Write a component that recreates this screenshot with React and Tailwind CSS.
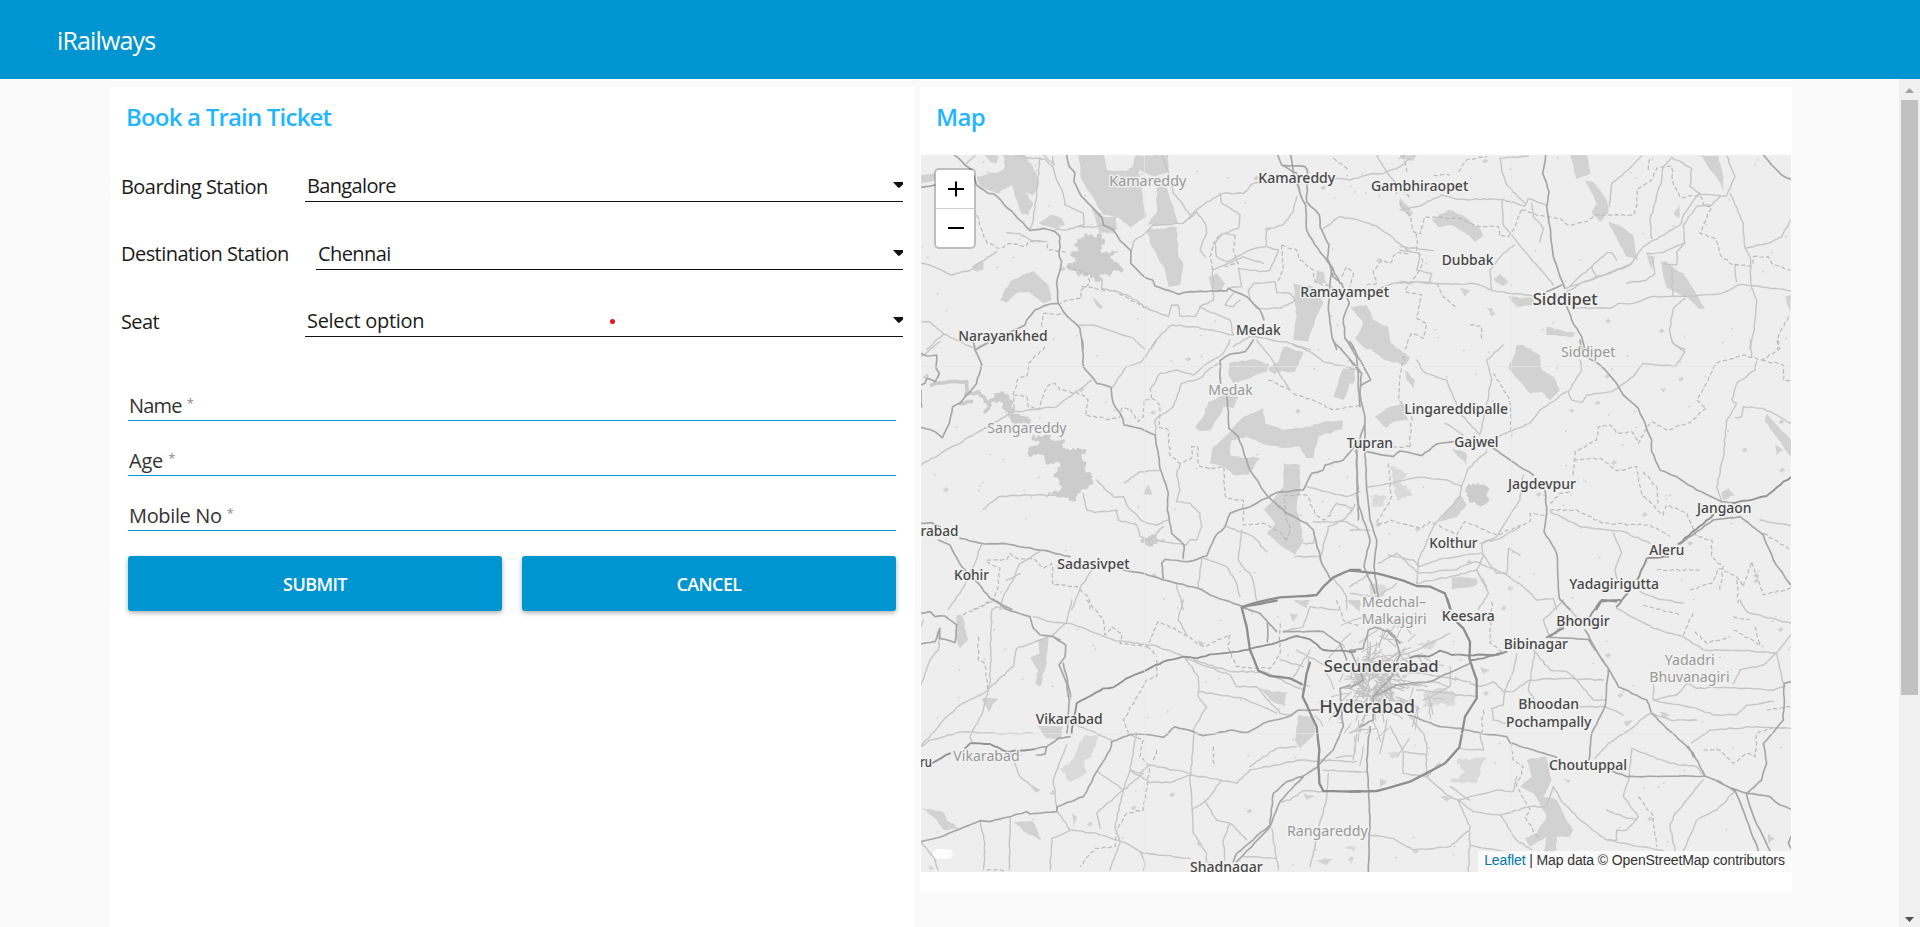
import React from "react";

/* Map sheets: each one is drawn on a grid three times finer than the page. */
const SHEETS = [
  {
    x: 900, y: 70,
    areas: "M255 255L295 258 290 280 270 275zM230 320L300 305 315 290 310 255 375 255 410 310 415 355 400 375 375 365 400 400 385 435 365 432 350 390 335 345 290 370 240 350zM535 255L612 255 620 300 680 303 700 290 705 258 805 255 805 305 765 320 718 300 730 400 740 440 690 472 650 440 610 435 545 330zM765 320L800 345 815 400 835 460 760 465 740 465 770 430 770 360zM740 480L830 470 835 560 850 580 840 645 805 650 795 600 755 530zM575 410L610 440 650 440 645 490 600 490zM415 460L450 435 485 445 495 465 470 475zM300 690L330 635 400 602 445 645 455 690 430 700 385 665 350 670 320 698zM1180 640L1240 650 1270 700 1250 740 1225 815 1180 810 1190 740zM1250 600L1270 605 1280 640 1245 640zM1350 710L1400 705 1420 750 1465 770 1470 838 1400 838 1365 805 1390 760zM63 315L105 310 105 330 63 340zM215 590L250 572 250 600 230 605zM575 680L610 710 600 718zM925 620L950 610 975 640 960 665 935 655z",
    water: "M500 590L530 575 510 555 530 545 525 520 560 490 580 500 600 490 615 515 600 540 625 550 655 540 630 565 655 580 670 605 640 600 630 620 600 612 600 635 560 615 530 612z",
    major: "M163 255L195 285 215 300 230 345 265 370 282 372 345 435 390 482 430 475 465 485 480 500 478 560 485 575 470 640 475 700 490 725 540 775 548 840M500 255L508 290 525 310 522 335 545 380 575 410 607 445 610 465 640 480 660 512 693 542 692 580 735 622 758 630 765 648 835 673 870 665 980 663 985 655 1040 680 1080 720 1092 750M475 700L450 702 405 720 380 750 375 765 300 800 230 838M1133 255L1145 285 1190 310 1200 370 1217 405 1220 480 1245 525 1290 585 1300 620 1325 640 1348 700 1330 745 1335 805 1360 838M1172 255L1180 310 1200 370M1145 285L1215 290 1222 300 1220 395 1258 435 1260 470 1287 525 1282 565 1320 640M1295 600L1290 640 1285 720 1297 805 1310 838M63 352L105 345",
    minor: "M63 580L100 590 155 615 205 603 245 575 290 545M420 262L410 370 400 450 390 478M345 255L375 262 435 268 458 290 470 330 488 365 495 405 550 430 553 465 530 470M430 255L462 285 458 260M465 478L500 480 530 470 575 472 605 465 650 475M195 285L225 258M320 488L355 490 395 512 440 515M63 755L90 755 132 792 230 838M132 792L80 838M695 542L700 515 735 490 760 465 850 460 895 415 940 385 970 370 1030 370 1060 340 1130 335M650 665L690 680 750 720 805 740 815 705 835 705 840 738 885 740 900 710 940 690 938 600M900 712L990 750 1000 795 960 785 880 770 815 765 785 790 755 830M530 765L580 765 640 785 700 805 735 838M1190 380L1180 425 1150 465 1100 478 1098 530 1050 540 1010 560 985 575 950 560 945 520 970 490 1005 495M938 600L960 590 1030 560 1090 580M915 560L900 540 920 490 915 460 890 425 850 460M1070 715L1140 715 1185 690 1170 670 1130 668 1125 635 1085 640 1060 640 1045 660 1050 690 1070 715M1098 530L1135 540 1110 600 1080 605 1015 595 1025 650 985 655M1270 475L1320 440 1370 448 1430 468 1480 505 1530 545M1305 325L1350 330 1400 315 1450 310 1500 290 1530 265M960 370L965 400 1020 435 1015 475 960 495M785 255L805 305 820 370 850 405 870 435M605 625L605 655 650 665M1000 670L975 705 1000 710 1020 690M1430 255L1450 290 1480 330 1490 370M1000 830L1050 800 1100 805 1170 820 1230 838M1360 660L1420 665 1480 640 1530 638",
    dashed: "M230 435L240 470 262 520 300 535 330 520 375 530 385 515 440 515 445 540 500 545M500 590L560 610 570 640 540 665 545 685 500 690 480 700M425 770L430 730 490 733M545 650L650 665 700 695 750 720M1005 495L1000 540 1015 580 975 590M938 600L930 560 940 520 960 495M1145 525L1190 540 1200 570 1240 600 1245 635 1290 650M1325 620L1340 590 1360 610 1350 650M1400 645L1430 640 1420 600 1450 570 1470 580 1490 548 1530 550M1480 330L1530 385M1300 265L1345 300M1145 525L1150 600 1130 640"
  },
  {
    x: 1400, y: 70,
    areas: "M510 255L560 255 572 310 528 328zM555 332L580 335 620 390 625 430 600 455 575 430 590 400zM625 455L655 465 700 495 705 540 715 570 680 560zM740 550L765 560 755 600zM780 570L850 610 885 665 915 715 900 718 860 680 800 655zM95 450L145 420 185 435 240 475 250 495 225 515 190 485 155 465 115 472zM900 255L955 258 970 320 970 365 955 330 930 300zM280 630L300 612 325 635 310 648zM325 680L400 685 400 705 350 710zM440 770L525 790 520 800 440 795zM345 838L360 825 400 838zM0 385L40 430 30 440 0 410zM180 655L210 662 195 680zM258 712L280 715 272 732zM820 430L840 405 838 445zM0 255L50 255 40 272 0 265zM1155 680L1173 675 1170 725z",
    water: "",
    major: "M437 255L428 310 447 365 440 410 450 470 460 560 480 620 495 655M500 710L515 750 545 800 555 838M1090 255L1115 285 1145 315 1173 328M440 665L485 645",
    minor: "M500 655L560 635 640 605 690 585 730 530 840 465 850 435 895 372 980 378 1005 320 980 258M500 665L560 632 640 603 695 582M0 420L60 408 125 375 170 388 310 388 375 408 385 385 438 405M308 388L310 465 460 645M0 635L130 642 230 642 290 665 400 678M530 715L630 715 655 700 700 700 755 680 880 678 965 670 1020 643 1173 662M990 370L1030 460 1035 530 1050 560 1052 640 1070 690 1060 790 1050 838M1035 535L1110 518 1145 500 1173 450M755 505L750 450 785 330 790 290 815 262 875 295 870 350 900 370M725 258L685 300 635 340 628 410M300 265L305 300 320 345 375 400M300 265L385 258M395 400L400 440 430 475 420 515M345 525L310 550 270 600 275 660M500 655L575 590 620 548 635 548 650 570M575 590L590 622M960 380L935 405 890 410 850 465 855 520 830 545 830 585 790 580M740 550L790 548 850 520M680 640L740 630 765 610 760 570M855 685L820 715 808 780 820 820 855 838M0 540L60 550 50 600 95 610 90 635 20 640M0 530L100 542M815 600L818 680M1005 585L1010 635",
    dashed: "M365 420L410 435 480 445 505 465 560 455 590 435 700 435 712 400 710 360 755 330 770 295 815 288 820 340 840 382 900 375 915 410 935 410 915 455 900 490 945 505 965 560 1000 585 1055 588 1060 560 1105 560 1115 580 1173 600M365 420L340 480 325 500 298 498 295 470 240 470 180 445 75 440 62 490 40 485 30 440 0 400M50 490L50 540 70 580 15 665 65 675 50 745 80 760 70 805 35 790 15 838M110 640L130 680 170 715M175 305L200 270 260 260M1165 740L1135 800 1140 838M100 315L150 315M210 765L245 770 245 810M10 255L20 310M745 300L750 265"
  },
  {
    x: 910, y: 340,
    areas: "M957 70L1030 57 1072 75 1070 95 970 130 955 105zM1075 85L1105 65 1120 20 1180 35 1155 95 1080 95zM855 262L880 230 895 185 950 160 985 170 970 205 940 200 930 225 900 272 870 274zM900 370L910 320 965 270 1000 230 1060 205 1065 250 1120 270 1200 260 1240 245 1297 240 1297 268 1225 290 1210 355 1190 355 1170 320 1120 325 1050 308 1010 290 965 300 960 345 1010 355 1030 350 1050 355 1015 405 970 405 940 380zM1270 170L1300 85 1335 90 1320 130 1300 180zM1120 370L1170 375 1170 450 1160 500 1180 600 1155 645 1110 615 1070 580 1095 550 1062 510 1120 440zM700 465L715 435 727 465zM38 110L55 98 58 120z",
    water: "M295 222L340 228 370 240 355 255 310 250zM365 290L425 285 425 300 465 300 455 325 530 330 515 350 530 365 520 385 550 410 545 435 505 460 490 485 460 470 405 465 450 450 450 425 430 410 450 370 410 375 400 345 350 355 355 325 395 315zM255 160L280 155 310 185 310 222 285 220 280 190 255 185zM690 605L735 585 750 570 740 595 765 600 720 620z",
    major: "M517 0L520 80 560 130 603 142 610 190 638 235 642 255 690 265 735 285 745 345 750 385 775 460 772 510 785 580 822 615 820 655M1030 0L1005 35 960 42 930 62 932 130M950 150L957 265 985 290 1020 390 1070 465 1130 520 1190 550 1210 570 1235 670 1260 715M1340 310L1300 360 1245 375 1240 390 1205 400 1180 450 1100 458 1020 500 960 520 945 560 915 590 890 648 835 665 765 658 755 670 760 715M150 595L225 612 280 610 420 635 480 650M640 690L700 700 760 720 865 745 900 765 1000 800M33 40L50 48 80 45 78 85 88 100 75 125 50 115 45 130 33 135M33 150L35 200M190 5L195 30 215 72 200 130 150 190 128 200 118 250 97 293 75 275 33 262M33 550L65 548 90 560M85 600L120 615 155 680 205 730 240 775 305 808M1268 0L1350 95M1310 0L1340 50 1350 200M1340 320L1345 540",
    highway: "M1000 800L1050 785 1110 772 1190 768 1220 765 1240 740 1270 712 1320 690 1350 690",
    minor: "M33 375L285 230 300 218 440 200 545 120M220 508L265 470 340 465 430 465M520 460L530 510 555 518 620 510 625 540 680 555 690 590 720 600 760 560M560 420L610 470 640 470 650 495 700 545 740 555 775 540M643 428L690 395 750 392M607 142L650 80 695 65 740 0M720 150L750 100 800 90 850 105 900 65 935 45M738 285L735 240 790 200 815 130 870 115 900 85 930 70M810 370L800 405 810 450 800 485 840 490 870 520 875 560 860 600 840 600 830 615 755 605M215 612L190 680 155 750 115 808M390 635L330 670 310 720 280 770 270 808M545 690L510 745 485 808M875 655L865 740M950 560L1030 590 1070 635M995 570L985 660 1025 710 1040 780M880 655L950 680 980 730 990 770M800 735L820 808M1190 440L1310 470 1350 455M1210 545L1310 545 1350 570M1150 15L1200 35 1240 65 1350 90M1040 0L1080 50 1110 105 1140 150M1270 712L1310 770 1310 808M1260 520L1280 490 1330 505 1300 540 1255 560 1230 660M200 25L240 0M290 720L330 700M1180 610L1210 610 1215 590M1155 650L1225 650M935 45L960 0M33 50L90 5",
    river: "M65 135L130 125 170 125 168 165 205 155 235 190 270 165M150 190L185 185M225 215L240 195",
    dashed: "M405 20L355 70 350 110 325 115 310 160 315 210M310 165L350 170 355 200 385 210 410 140 435 130 450 150 520 165 535 180 525 225 600 238 630 230 635 205 660 205 685 245 700 230 702 180 725 175 720 150M725 175L750 195 745 260 775 270 780 345 810 370 845 355 845 320 862 320 865 375 900 388 940 380 945 460 950 475 1000 480 1000 555 1060 550 1115 580 1130 605 1140 570 1125 520 1125 465 1190 465 1215 520 1240 540 1270 520M230 660L290 658 300 640 320 655 370 655 400 685 425 670 430 735 500 740 535 770 540 808M230 665L270 685 265 740 250 780 190 808M1075 120L1140 150M1150 160L1230 190 1270 210 1350 195"
  },
  {
    x: 1350, y: 340,
    areas: "M475 85L490 50 500 15 520 15 570 45 575 90 610 110 630 150 600 180 575 155 540 160 520 135zM20 0L110 0 180 50 165 75 105 60zM75 230L110 205 160 190 175 240 130 245 110 265zM165 90L195 120 190 145 170 120zM305 325L350 340 350 375zM330 465L350 495 320 530 265 545zM305 710L380 715 380 735 305 748zM1250 220L1323 300 1323 350 1245 245zM1275 315L1300 330 1280 345zM0 80L15 85 12 130 0 130zM930 145L950 145 940 157zM655 210L672 208 668 220zM1115 455L1135 445 1155 465 1120 480z",
    light: "M120 380L175 400 150 420 190 465 140 480zM70 465L110 470 95 500 65 500zM60 730L110 740 100 770 60 760z",
    water: "M350 440L385 430 418 450 410 490 390 500 355 480z",
    major: "M0 60L35 100 30 160 45 230 45 330 50 450 60 540 80 600 72 680 85 770M0 5L30 60 62 120 35 135M45 250L20 330 22 480 60 600 42 680 75 760M50 335L130 350 150 333 215 347 260 312 310 305M430 325L480 360 550 405M585 450L590 520 582 575 620 640 628 775 660 808M690 0L700 45 750 75 800 130 820 165 865 205 905 300 905 335 930 390 980 410 1040 450 1115 485 1150 488M1170 530L1090 540 1040 575 990 612M1170 530L1240 585 1270 660 1323 735",
    highway: "M0 692L80 700 160 722 200 738 240 740 285 760 302 808",
    rail: "M1323 412L1300 425 1250 468 1150 490M1090 525L985 612M955 650L890 655 862 720M835 758L800 800M740 808L755 780 800 785",
    minor: "M200 60L220 95 290 120 330 220 385 280M445 290L540 250 570 210 650 155M655 155L695 90 690 60M655 155L665 180 695 188 710 165 785 155 850 110 880 70 975 80 1005 35 965 5M460 15L410 60 425 120 400 240 388 285M285 250L340 285M50 442L210 412 290 420 335 440M410 335L355 385 335 440 330 470 255 550 205 660 200 730M520 405L510 480 440 590 395 610M600 515L690 560 820 575 900 610M1115 485L1100 440 1120 350 1130 240 1160 190 1145 180 1160 130 1215 90 1220 65M1155 233L1175 230 1180 200 1240 205 1323 250M1230 540L1323 558M790 580L815 640 795 690 800 720M470 700L475 625 510 645M115 645L190 660 205 680 280 655 390 640M205 700L310 690 380 665 460 700 520 740 560 780 610 775 620 808M395 610L400 650 380 690 415 760 385 808M85 670L140 640 205 700M200 730L300 710 380 690 410 740M870 755L920 775 1000 790M1200 0L1205 50M390 610L450 595 510 560M395 640L440 700 470 700M0 740L60 700M0 760L85 770 140 730M0 570L60 570",
    dashed: "M85 555L120 540 215 565 240 545 320 585 345 545 440 585 540 545 540 520 585 525M670 405L675 335 740 300 745 260 780 255 800 280 845 275 865 310 890 265 905 245 950 270 1020 248 1070 205 1040 180 1100 70 1180 45 1235 60 1285 30 1280 0M1235 60L1300 75 1300 120 1323 122M670 360L750 355 800 392 860 380 875 460 940 525 950 495 1010 520 1040 590 1085 600 1085 650 1120 680 1110 750M600 510L680 510 760 550 900 555 960 590M600 490L630 460 660 455M180 320L185 230 145 180 150 100 165 40M115 370L125 470 80 550M180 320L130 320M1020 750L1085 730 1105 685 1160 710 1180 740 1205 665 1240 765 1323 745M430 100L480 180 485 290M880 395L920 440 925 490M1240 580L1323 630M0 520L15 490M920 690L1050 690M1160 720L1165 790"
  },
  {
    x: 910, y: 600,
    areas: "M140 45L155 45 175 120 150 145 140 120zM385 120L415 110 410 190 390 260 375 250 385 210 360 175 390 160zM380 375L460 380 450 415 410 415zM215 295L265 295 235 335zM33 625L100 635 110 660 150 685 100 690 70 650zM310 665L370 665 395 720 350 700zM1050 265L1095 275 1130 275 1125 320 1080 300zM1165 345L1210 350 1215 400 1170 445 1155 420zM865 120L885 130 870 140zM1180 580L1215 590 1190 600zM1220 780L1270 775 1250 795zM360 560L392 570 380 578zM485 640L500 650 490 685zM1150 0L1200 0 1190 25zM1140 40L1165 45 1150 65zM55 795L75 805 60 810zM1310 0L1350 0 1350 35z",
    light: "M520 410L565 410 545 470 525 480 530 520 480 545 450 505 480 490zM1305 740L1340 740 1330 755z",
    water: "",
    major: "M250 0L290 28 360 50 370 85 390 105 430 110 467 135 465 170 447 195 470 250 478 300 470 400M430 110L450 120M460 190L482 290M480 410L445 415 410 440 370 448M380 465L405 462 410 440M33 725L100 708 210 662 240 665 350 635 360 642 440 635 442 620 520 590 560 515 600 450 605 425 665 402 710 403 760 412 795 380 850 395 880 407 920 400 960 390 1010 398 1060 370 1140 348 1165 330 1228 330M1225 495L1270 450 1300 380M1225 500L1175 530 1130 545 1090 580 1080 675 980 760 970 785M1180 530L1110 605 1080 680 1000 765 980 785M33 40L60 35 75 50 105 48 140 75 135 128 88 115 90 85 75 125 33 132M1100 95L1050 40 995 22M1120 95L1240 95 1290 130 1310 180M1072 70L1072 125M1300 380L1290 265 1320 255",
    highway: "M995 22L1100 2M995 22L1010 80 1020 150 1045 212 1080 228 1140 235 1175 252M1200 188L1190 220 1178 290 1220 380 1228 450 1225 495 1228 550 1240 573 1350 575",
    rail: "M485 400L500 310 580 265 610 262 650 235 700 215 760 185 820 170 860 175 900 163 985 155 1100 128 1160 108 1200 118 1240 150 1335 155M370 448L290 455 240 432 180 430 165 445M65 490L120 460",
    minor: "M33 440L110 350 150 315 220 280 310 200 320 145 430 105 470 65 485 0M33 255L60 180 85 150 90 100M245 30L240 250 215 345 180 410 190 430M370 50L420 65 480 70 610 120 740 138 820 170M470 435L430 540 440 630 480 690 560 700 650 730 700 760 840 775M480 690L425 715 420 810M605 420L500 375M680 400L660 510 640 570 615 680 630 730 600 810M565 515L640 570 560 640 570 685M640 570L700 520M660 510L720 548 780 548 840 525 900 535 980 550 1020 510 1170 480 1225 485M825 175L865 230 865 290 890 320 850 390 850 430 840 540 850 700 890 760 890 785M825 175L960 225 980 260 1040 260 1110 340 1140 345M850 180L960 215 1060 215 1180 270M865 275L1000 295 1100 340M845 630L890 600 935 540M885 600L920 660 960 670 1010 720M960 670L940 720 945 780M210 662L225 730 220 810M300 655L298 810M33 725L70 770 85 810M1085 685L1105 810M1255 520L1250 590 1200 800M33 440L60 420 160 395 260 400 370 400M300 455L330 530 380 570M820 0L805 60 830 105M1110 605L1140 600 1180 572 1250 575M1000 770L1100 775M840 520L720 495 690 520 660 510M690 755L705 790 700 810M1020 500L1100 445 1160 440M1225 480L1340 485M1240 510L1350 515M245 30L260 20 290 28M33 80L40 60M1110 180L1180 200M1150 230L1200 150M1160 150L1250 200M1120 95L1180 80 1200 20 1290 30",
    dashed: "M160 45L245 5M205 110L205 180 225 190 235 270M530 0L580 60 585 105 605 80 635 100 630 130 710 140 745 65 820 100 880 140 960 105 955 145 980 200 1080 205 1110 160 1110 70M740 180L740 230 710 240 640 360 655 400 700 420 690 470 720 500 700 630 650 640 620 690 615 740 555 745 510 800M710 140L740 170M740 450L730 480M910 440L910 500M230 810L290 810M1280 0L1300 60 1350 80"
  },
  {
    x: 1350, y: 600,
    areas: "M530 480L590 470 605 540 580 590 620 600 640 640 670 690 660 710 620 710 620 750 580 760 590 710 540 740 525 715 560 700 590 650 550 580 510 560 545 530zM820 365L850 360 830 380zM390 200L420 210 400 222zM90 535L110 545 90 560zM270 590L310 590 290 605zM930 335L960 345 940 355zM640 535L662 540 655 550zM1255 700L1275 715 1255 730z",
    light: "M320 480L410 475 390 510 380 550 300 545 345 520zM225 275L280 265 325 285 310 320 280 310 220 325zM100 455L150 455 130 475zM200 130L260 120 240 150z",
    water: "",
    major: "M175 345L270 380 330 385 400 402 470 410 480 428 550 450 620 472M785 512L830 530 1065 528M660 60L600 112 715 118 775 205 805 260 890 300 905 340 1030 460 1065 528 1155 568 1190 580 1260 590 1290 615 1323 628M705 90L750 170 775 205M1155 570L1190 660 1225 752M1190 585L1215 660 1260 752M1065 528L1110 545 1155 575M1190 580L1235 540 1250 490 1240 430 1300 360 1303 250 1323 245M775 205L765 320 725 400 717 480M60 380L50 480 60 650 55 815M80 285L140 255 200 248 240 245 360 190M1323 710L1315 730 1323 745M1030 470L1015 440M115 90L135 110 150 165 125 230 70 290 70 360 30 380M0 150L40 145 55 90 75 82 115 95 150 130M0 265L40 240 30 215 0 150",
    highway: "M0 575L80 573 180 545 285 490 328 442 345 350 380 295 380 240 358 175 360 125 340 85 322 68M293 0L300 25",
    rail: "M180 175L200 168 235 170 270 152 305 165 440 165 470 155M590 112L640 85M720 50L750 5 810 0M360 180L400 175 460 158",
    minor: "M630 0L680 50M800 25L910 85 1000 110 1060 150 1180 152 1280 158 1323 105M1280 158L1300 250M1280 158L1240 195 1170 210 1150 250M1170 0L1190 35 1240 50 1323 70M910 300L980 285 1010 250 1040 265 1120 262 1270 270 1303 260M910 300L1040 325 1090 345 1160 345 1190 315 1270 305M900 340L830 395 775 430 735 475M1065 530L1040 500 960 490 910 470 845 445 838 530 820 590M1025 430L1080 390 1220 380 1323 385M1060 540L970 650 960 680 975 752M1155 575L1100 630 1040 660 1000 752M300 200L300 260 220 300M360 250L390 260 430 245 460 275 490 275 540 240 640 235 760 240M550 150L600 210 650 215 680 240M555 150L535 270 560 310M680 240L730 300 765 300M690 320L765 320 820 345M500 160L490 215 465 270 460 315 425 325 430 360 470 370M180 350L220 400 230 430 230 530 290 585 325 600 440 570 490 575 500 530M325 600L360 680 355 815M325 600L370 635 450 645 540 620 590 620 610 560 640 610 690 660 770 720 870 740 940 752M60 705L130 715 190 750 300 740 360 690M110 360L90 460M120 380L160 455 230 465M160 455L160 520 230 530M450 645L500 720 545 750M390 400L400 450 330 445M300 100L200 150 150 165M150 210L360 245M820 590L865 650 830 690 800 690 800 720 770 720M770 630L820 650 860 660M640 0L580 60 600 110M360 735L480 760M200 270L380 290M0 400L40 370M0 515L50 515M20 400L10 480M230 530L270 490M300 560L360 600M910 255L910 300M905 340L960 360 1040 360",
    dashed: "M425 5L420 130 460 160M485 430L490 480 520 500 500 560 540 630 525 650 570 720M1060 450L1110 450 1150 490 1190 460 1215 470 1220 400 1270 380M1000 105L1030 40M1035 95L1070 130 1140 110M1150 90L1240 140M1250 330L1323 320M865 590L910 650 920 740M880 15L990 45M1215 80L1230 130M1150 50L1200 60M400 330L395 400"
  }
];

/* text, x, baseline, width, size, tone */
const LABELS = [
  ["Kamareddy", 1109.3, 185.7, 77, 13.6, 1],
  ["Kamareddy", 1258.3, 183, 77, 13.6, 0],
  ["Gambhiraopet", 1371, 191.3, 97.3, 13.6, 0],
  ["Ramayampet", 1300.3, 296.7, 88.7, 13.6, 0],
  ["Narayankhed", 958.3, 341.3, 89.3, 13.6, 0],
  ["Medak", 1236, 335, 44.7, 13.6, 0],
  ["Dubbak", 1441.7, 264.7, 51.7, 13.6, 0],
  ["Siddipet", 1532.7, 305.3, 65, 16, 0],
  ["Siddipet", 1561, 357.3, 54.3, 13.6, 1],
  ["Medak", 1208.3, 394.7, 44.3, 13.6, 1],
  ["Sangareddy", 987.3, 432.7, 79.3, 13.6, 1],
  ["Lingareddipalle", 1404.3, 414.3, 103.7, 13.6, 0],
  ["Tupran", 1346.7, 447.7, 46.3, 13.6, 0],
  ["Gajwel", 1454.3, 446.7, 44.3, 13.6, 0],
  ["Jagdevpur", 1508, 488.7, 68, 13.6, 0],
  ["Jangaon", 1697, 512.7, 54.5, 13.6, 0],
  ["Kolthur", 1429.3, 547.7, 48.3, 13.6, 0],
  ["Aleru", 1649.3, 554.7, 35, 13.6, 0],
  ["Yadagirigutta", 1569.3, 589, 89.7, 13.6, 0],
  ["rabad", 920.5, 536.3, 38, 13.6, 0],
  ["Kohir", 954, 579.7, 35, 13.6, 0],
  ["Sadasivpet", 1057.3, 568.7, 72.3, 13.6, 0],
  ["Medchal–", 1362, 607.3, 64, 13.6, 1],
  ["Malkajgiri", 1361.7, 624.3, 65, 13.6, 1],
  ["Keesara", 1441.7, 621, 53, 13.6, 0],
  ["Bhongir", 1556.3, 625.7, 53.3, 13.6, 0],
  ["Bibinagar", 1503.7, 649, 64.3, 13.6, 0],
  ["Secunderabad", 1323.7, 672, 115, 16, 0],
  ["Hyderabad", 1319.3, 712.7, 95.7, 18, 0],
  ["Yadadri", 1664.7, 665.3, 50, 13.6, 1],
  ["Bhuvanagiri", 1649.3, 682.3, 80.3, 13.6, 1],
  ["Bhoodan", 1518.3, 708.7, 60.7, 13.6, 0],
  ["Pochampally", 1506, 727, 85.3, 13.6, 0],
  ["Vikarabad", 1035.7, 723.7, 67, 13.6, 0],
  ["Vikarabad", 953.3, 761, 66.3, 13.6, 1],
  ["ru", 920, 767.3, 12, 13.6, 0],
  ["Choutuppal", 1549, 770.3, 78, 13.6, 0],
  ["Rangareddy", 1287, 835.7, 80.7, 13.6, 1],
  ["Shadnagar", 1190, 871.7, 72.7, 13.6, 0]
];

function rng(seed) {
  let s = seed;
  return () => {
    s = (s * 16807) % 2147483647;
    return s / 2147483647;
  };
}

/* Splits every straight run into short steps and moves each inner point a
   little to the side, which gives roads and shores their natural wander. */
function wander(d, step, amount, seed) {
  const rand = rng(seed);
  return d
    .split("M")
    .filter((part) => part.trim())
    .map((part) => {
      const closed = part.includes("z");
      const n = part.match(/-?[\d.]+/g).map(Number);
      const pts = [];
      for (let i = 0; i + 1 < n.length; i += 2) pts.push([n[i], n[i + 1]]);
      if (closed) pts.push(pts[0]);
      let out = `M${pts[0][0]} ${pts[0][1]}L`;
      for (let i = 1; i < pts.length; i++) {
        const [ax, ay] = pts[i - 1];
        const [bx, by] = pts[i];
        const len = Math.hypot(bx - ax, by - ay) || 1;
        const k = Math.max(1, Math.round(len / step));
        for (let j = 1; j <= k; j++) {
          const t = j / k;
          const off = j === k ? 0 : (rand() - 0.5) * 2 * amount;
          const px = ax + (bx - ax) * t - ((by - ay) / len) * off;
          const py = ay + (by - ay) * t + ((bx - ax) / len) * off;
          out += `${px.toFixed(1)} ${py.toFixed(1)} `;
        }
      }
      return out + (closed ? "z" : "");
    })
    .join("");
}

/* Small ponds spread over the countryside. */
const r1 = rng(77);
const PONDS = Array.from({ length: 330 }, () => {
  const x = 921 + r1() * 870;
  const y = 155 + r1() * 717;
  const a = r1() < 0.18 ? 2.6 : 1.1;
  return `M${x.toFixed(1)} ${y.toFixed(1)}l${(a * 1.4).toFixed(1)} ${(-a).toFixed(1)} ${a.toFixed(1)} ${(a * 0.9).toFixed(1)} ${(-a * 1.3).toFixed(1)} ${a.toFixed(1)}z`;
}).join("");

/* Street mesh inside the ring road. */
const r2 = rng(4211);
const STREETS = Array.from({ length: 230 }, (_, i) => {
  const ang = r2() * Math.PI * 2;
  const rad = 4 + r2() * r2() * 84;
  const x = 1372 + Math.cos(ang) * rad * 0.85;
  const y = 683 + Math.sin(ang) * rad;
  const dir = i % 2 ? ang + (r2() - 0.5) * 0.9 : ang + 1.57 + (r2() - 0.5) * 0.9;
  const len = 7 + r2() * 16;
  const dx = Math.cos(dir) * len;
  const dy = Math.sin(dir) * len;
  return `M${x.toFixed(1)} ${y.toFixed(1)}l${(dx / 2 + 1.5).toFixed(1)} ${(dy / 2 - 1).toFixed(1)} ${(dx / 2).toFixed(1)} ${(dy / 2 + 1).toFixed(1)}`;
}).join("");

function RegionMap() {
  const each = (key, step, amount, props) =>
    SHEETS.filter((s) => s[key]).map((s, i) => (
      <path
        key={s.x + "-" + s.y}
        d={wander(s[key], step, amount, 31 + i * 17)}
        transform={`translate(${s.x} ${s.y}) scale(0.33333)`}
        {...props}
      />
    ));
  return (
    <svg className="block h-[717px] w-[870px]" viewBox="921 155 870 717" fill="none">
      <rect x="921" y="155" width="870" height="717" fill="#eeeeee" />
      {each("light", 9, 5, { fill: "#dadada" })}
      {each("areas", 13, 2.5, { fill: "#d2d2d2" })}
      <path d={PONDS} fill="#d2d2d2" />
      {each("water", 7, 7, { fill: "#cccccc" })}
      <g strokeLinejoin="round" strokeLinecap="round">
        {each("river", 12, 3, { stroke: "#cccccc", strokeWidth: 11 })}
        <path d={STREETS} stroke="#c3c3c3" strokeWidth="1.1" />
        {each("dashed", 10, 2.5, { stroke: "#bababa", strokeWidth: 3.6, strokeDasharray: "13 7", strokeLinecap: "butt" })}
        {each("minor", 12, 2, { stroke: "#c6c6c6", strokeWidth: 4.2 })}
        {each("major", 16, 1.6, { stroke: "#a6a6a6", strokeWidth: 5 })}
        {each("rail", 14, 1.6, { stroke: "#929292", strokeWidth: 5.6 })}
        {each("highway", 30, 0.6, { stroke: "#8e8e8e", strokeWidth: 7 })}
      </g>
      <path d="M1144.5 155V872M1511.5 155V872M921 366.5H1791M921 733.5H1791" stroke="#e8e8e8" strokeOpacity="0.6" />
      <g fontFamily="'Noto Sans', sans-serif" stroke="#f2f2f2" strokeOpacity="0.85" strokeWidth="3" strokeLinejoin="round" style={{ paintOrder: "stroke" }}>
        {LABELS.map(([t, x, y, w, size, tone]) => (
          <text key={t + x} x={x} y={y} textLength={w} lengthAdjust="spacingAndGlyphs" fontSize={size} fontWeight={tone ? 400 : 500} fill={tone ? "#999999" : "#484848"}>
            {t}
          </text>
        ))}
      </g>
      <rect x="933" y="849" width="20" height="10" rx="5" fill="#fff" fillOpacity="0.85" />
    </svg>
  );
}

function Caret() {
  return (
    <svg className="mb-[13px] ml-auto h-[6px] w-[10px] shrink-0" viewBox="0 0 10 6">
      <path d="M0 0H10V2.6L6.5 5.8H5.2z" fill="#111" />
    </svg>
  );
}

function SelectRow({ label, value, rowClass, labelClass, valueClass, dot }) {
  return (
    <div className={"flex h-[55px] items-end pr-3 pl-[11px] " + rowClass}>
      <span className={"shrink-0 text-[20px] leading-[27px] " + labelClass}>{label}</span>
      <div className="flex h-[34px] flex-1 items-end border-b border-[#111]">
        <span className={"mb-[2px] ml-[2px] text-[20px] leading-[27px] whitespace-nowrap " + valueClass}>{value}</span>
        {dot && <span className="mb-[12px] ml-[186px] size-[5px] rounded-full bg-[#e5161d]" />}
        <Caret />
      </div>
    </div>
  );
}

function Field({ label, labelClass }) {
  return (
    <div className="mr-[19px] ml-[18px] flex h-[55px] items-end border-b border-[#0094d0] text-[20px] leading-[27px] text-[#333]">
      <span className={"mb-px ml-px " + labelClass}>{label}</span>
      <span className="mb-[7px] ml-[5px] text-[13px] leading-[20px] text-[#888]">*</span>
    </div>
  );
}

function Button({ children }) {
  return (
    <button className="h-[55px] flex-1 rounded-[3px] bg-[#0094d0] pt-[2px] text-[18px] font-semibold tracking-[-0.6px] text-white shadow-[0_2px_5px_rgba(0,0,0,0.32)]">
      {children}
    </button>
  );
}

export default function App() {
  return (
    <div className="flex h-[927px] w-[1920px] flex-col overflow-hidden bg-[#fafafa] font-['Open_Sans',sans-serif] text-[#1a1a1a]">
      <header className="flex h-[79px] shrink-0 items-center bg-[#0094d0] pt-[3px] pl-[57px]">
        <h1 className="text-[25px] font-medium tracking-[-0.85px] text-white">iRailways</h1>
      </header>
      <div className="flex min-h-0 flex-1">
        <main className="flex flex-1 items-start gap-[5px] pt-2 pl-[110px]">
          <section className="h-[840px] w-[805px] bg-white">
            <h2 className="h-[60px] pt-[10px] pl-[16px] text-[24px] leading-[40px] font-semibold tracking-[-0.8px] text-[#1fb6ff]">
              Book a Train Ticket
            </h2>
            <SelectRow label="Boarding Station" value="Bangalore" rowClass="" labelClass="mb-[2px] w-[184px] tracking-[-0.55px]" valueClass="tracking-[-0.65px]" />
            <SelectRow label="Destination Station" value="Chennai" rowClass="mt-[13px]" labelClass="mb-[3px] w-[195px] tracking-[-0.55px]" valueClass="tracking-[-0.6px]" />
            <SelectRow label="Seat" value="Select option" rowClass="mt-[12px]" labelClass="mb-[2px] w-[184px] tracking-[-0.6px]" valueClass="tracking-[-0.3px]" dot />
            <div className="mt-[29px]">
              <Field label="Name" labelClass="tracking-[-0.8px]" />
              <Field label="Age" labelClass="tracking-[-0.2px]" />
              <Field label="Mobile No" labelClass="tracking-[-0.35px]" />
            </div>
            <div className="mt-[25px] mr-[19px] ml-[18px] flex gap-5">
              <Button>SUBMIT</Button>
              <Button>CANCEL</Button>
            </div>
          </section>
          <section className="h-[805px] w-[872px] bg-white px-px">
            <h2 className="h-[68px] pt-[10px] pl-[15px] text-[24px] leading-[40px] font-semibold tracking-[-0.6px] text-[#1fb6ff]">Map</h2>
            <div className="relative">
              <RegionMap />
              <div className="absolute top-[13px] left-[13px] w-[42px] overflow-hidden rounded-[5px] border-2 border-black/20 bg-white bg-clip-padding">
                <div className="flex h-[39px] items-center justify-center border-b border-[#ccc] pl-[2px]">
                  <svg className="size-4" viewBox="0 0 16 16">
                    <path d="M0 8H16M8 0.5V15.5" stroke="#000" strokeWidth="2" />
                  </svg>
                </div>
                <div className="flex h-[38px] items-center justify-center pl-[2px]">
                  <svg className="size-4" viewBox="0 0 16 16">
                    <path d="M0 8H16" stroke="#000" strokeWidth="2" />
                  </svg>
                </div>
              </div>
              <div className="absolute right-0 bottom-0 flex h-[21px] w-[313px] items-center justify-center bg-white/70 pb-[2px] font-['Liberation_Sans',sans-serif] text-[14px] tracking-[-0.11px] whitespace-pre text-[#333]">
                <span className="text-[#0078a8]">Leaflet</span>
                <span> | Map data © OpenStreetMap contributors</span>
              </div>
            </div>
          </section>
        </main>
        <div className="flex w-[21px] shrink-0 flex-col items-center bg-[#f0f0f0]">
          <div className="flex h-[21px] items-center pt-[2px]">
            <svg className="h-[5px] w-[9px]" viewBox="0 0 9 5"><path d="M4.5 0L9 5H0z" fill="#a3a3a3" /></svg>
          </div>
          <div className="h-[595px] w-[17px] bg-[#c1c1c1]" />
          <div className="mt-auto pb-[5px]">
            <svg className="h-[5px] w-[9px]" viewBox="0 0 9 5"><path d="M0 0H9L4.5 5z" fill="#505050" /></svg>
          </div>
        </div>
      </div>
    </div>
  );
}
